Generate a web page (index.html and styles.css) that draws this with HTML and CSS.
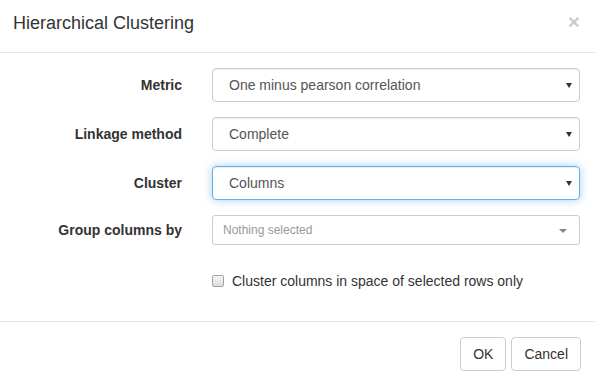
FILE: index.html
```html
<!DOCTYPE html>
<html>
<head>
<meta charset="utf-8">
<link rel="stylesheet" href="styles.css">
</head>
<body>
<div class="modal">
  <div class="modal-header">
    <h4 class="modal-title">Hierarchical Clustering</h4>
    <button class="close" type="button">&times;</button>
  </div>
  <div class="modal-body">
    <div class="form-row">
      <label class="row-label">Metric</label>
      <div class="select-wrap">
        <select class="form-control">
          <option>One minus pearson correlation</option>
        </select>
      </div>
    </div>
    <div class="form-row">
      <label class="row-label">Linkage method</label>
      <div class="select-wrap">
        <select class="form-control">
          <option>Complete</option>
        </select>
      </div>
    </div>
    <div class="form-row">
      <label class="row-label">Cluster</label>
      <div class="select-wrap">
        <select class="form-control focused">
          <option>Columns</option>
        </select>
      </div>
    </div>
    <div class="form-row">
      <label class="row-label">Group columns by</label>
      <div class="picker">
        <span class="picker-text">Nothing selected</span>
        <span class="caret"></span>
      </div>
    </div>
    <div class="form-row check-row">
      <span></span>
      <label class="checkbox"><span class="check-box"></span><span>Cluster columns in space of selected rows only</span></label>
    </div>
  </div>
  <div class="modal-footer">
    <button class="btn" type="button">OK</button>
    <button class="btn" type="button">Cancel</button>
  </div>
</div>
</body>
</html>
```

FILE: styles.css
```css
* { box-sizing: border-box; }
html, body { margin: 0; padding: 0; background: #fff; }
body {
  font-family: "Liberation Sans", Arial, Helvetica, sans-serif;
  font-size: 14px;
  line-height: 20px;
  color: #333;
  width: 595px;
  height: 382px;
  overflow: hidden;
}
.modal { width: 595px; }
.modal-header {
  display: flex;
  justify-content: space-between;
  align-items: flex-start;
  padding: 10px 15px 15px 13px;
  border-bottom: 1px solid #e5e5e5;
  height: 53px;
}
.modal-title {
  margin: 0;
  font-size: 18px;
  font-weight: normal;
  line-height: 26px;
  color: #333;
}
.close {
  border: 0;
  background: transparent;
  padding: 0;
  margin: 1px 0 0 0;
  font-family: "Liberation Sans", Arial, sans-serif;
  font-size: 21px;
  font-weight: bold;
  line-height: 21px;
  color: #000;
  opacity: 0.2;
}
.modal-body {
  padding: 15px 15px 15px 0;
  display: flex;
  flex-direction: column;
  gap: 15px;
}
.form-row {
  display: grid;
  grid-template-columns: 182px 368px;
  column-gap: 30px;
  align-items: center;
}
.row-label {
  text-align: right;
  font-weight: bold;
  color: #333;
}
.select-wrap {
  position: relative;
  width: 368px;
}
.select-wrap::after {
  content: "";
  position: absolute;
  right: 8px;
  top: 15px;
  width: 0;
  height: 0;
  border-top: 5px solid #333;
  border-left: 3px solid transparent;
  border-right: 3px solid transparent;
  pointer-events: none;
}
.form-control {
  display: block;
  width: 368px;
  height: 34px;
  padding: 6px 12px 6px 16px;
  font-family: "Liberation Sans", Arial, sans-serif;
  font-size: 14px;
  line-height: 20px;
  color: #555;
  background-color: #fff;
  border: 1px solid #ccc;
  border-radius: 4px;
  box-shadow: inset 0 1px 1px rgba(0,0,0,.075);
  margin: 0;
  -webkit-appearance: none;
  appearance: none;
}
.form-control.focused {
  border-color: #66afe9;
  outline: 0;
  box-shadow: inset 0 1px 1px rgba(0,0,0,.075), 0 0 8px rgba(102,175,233,.6);
}
.picker {
  display: flex;
  align-items: center;
  justify-content: space-between;
  height: 30px;
  padding: 5px 12px 5px 10px;
  border: 1px solid #ccc;
  border-radius: 3px;
  background: #fff;
  font-size: 12px;
  line-height: 18px;
  color: #999;
}
.caret {
  width: 0;
  height: 0;
  border-top: 4px solid #888;
  border-left: 4px solid transparent;
  border-right: 4px solid transparent;
  margin-top: 1px;
}
.check-row {
  padding-top: 11px;
  padding-bottom: 15px;
}
.checkbox {
  display: flex;
  align-items: center;
  gap: 8px;
  font-weight: normal;
  color: #333;
}
.check-box {
  width: 12px;
  height: 12px;
  border: 1px solid #a3a3a3;
  border-radius: 2px;
  background: linear-gradient(#f6f6f6, #dcdcdc);
}
.modal-footer {
  display: flex;
  justify-content: flex-end;
  gap: 5px;
  padding: 15px 14px;
  border-top: 1px solid #e5e5e5;
}
.btn {
  height: 34px;
  padding: 6px 12px;
  font-family: "Liberation Sans", Arial, sans-serif;
  font-size: 14px;
  line-height: 20px;
  color: #333;
  background: #fff;
  border: 1px solid #ccc;
  border-radius: 4px;
}
```
